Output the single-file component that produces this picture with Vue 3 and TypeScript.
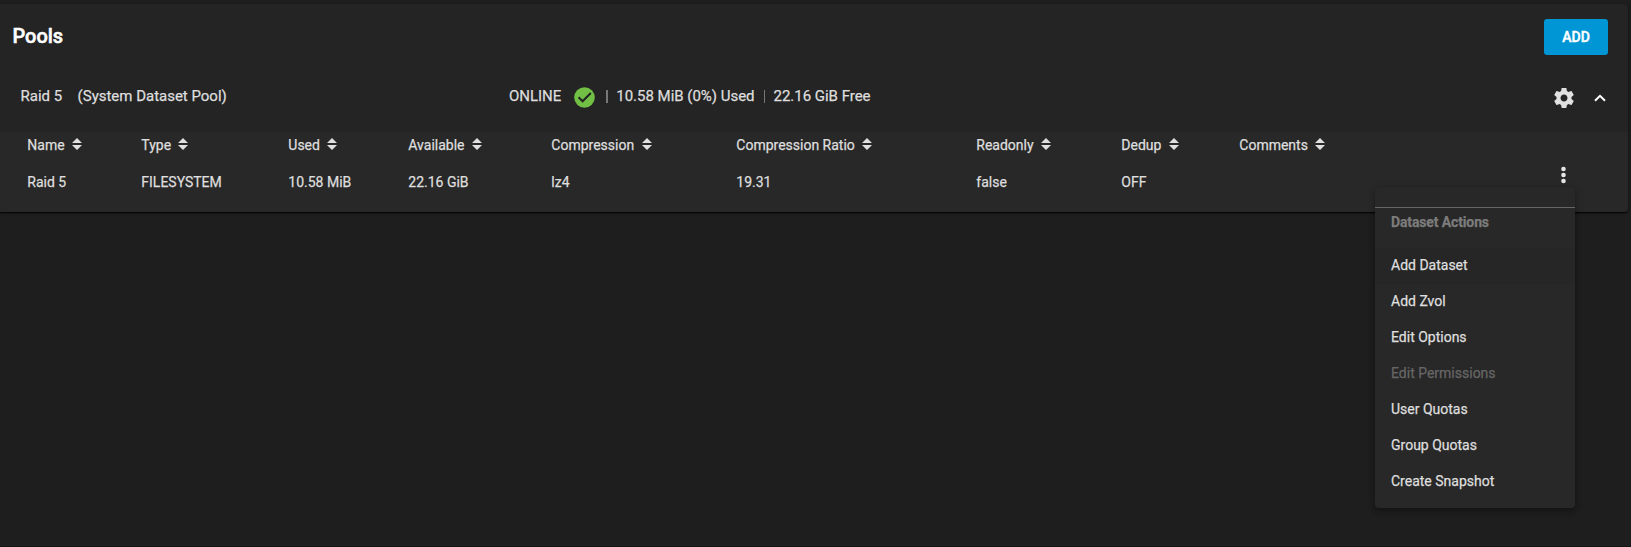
<script setup lang="ts">
interface Column {
  label: string
  value: string
}

interface Action {
  label: string
  state?: 'focused' | 'disabled'
}

const columns: Column[] = [
  { label: 'Name', value: 'Raid 5' },
  { label: 'Type', value: 'FILESYSTEM' },
  { label: 'Used', value: '10.58 MiB' },
  { label: 'Available', value: '22.16 GiB' },
  { label: 'Compression', value: 'lz4' },
  { label: 'Compression Ratio', value: '19.31' },
  { label: 'Readonly', value: 'false' },
  { label: 'Dedup', value: 'OFF' },
  { label: 'Comments', value: '' },
]

const actions: Action[] = [
  { label: 'Add Dataset', state: 'focused' },
  { label: 'Add Zvol' },
  { label: 'Edit Options' },
  { label: 'Edit Permissions', state: 'disabled' },
  { label: 'User Quotas' },
  { label: 'Group Quotas' },
  { label: 'Create Snapshot' },
]
</script>

<template>
  <main class="page">
    <section class="card">
      <header class="card-header">
        <h1>Pools</h1>
        <button class="add" type="button">ADD</button>
      </header>

      <div class="pool">
        <div class="pool-name"><span>Raid 5</span><span>(System Dataset Pool)</span></div>
        <div class="pool-status">
          <span>ONLINE</span>
          <svg class="check" viewBox="0 0 21 21">
            <circle cx="10.5" cy="10.5" r="10.3" fill="#71bf44" />
            <path d="M4.6 10.3 8.6 14.3 16.8 5.9" fill="none" stroke="#242424" stroke-width="2.1" />
          </svg>
          <i class="bar" />
          <span class="used">10.58 MiB (0%) Used</span>
          <i class="bar" />
          <span>22.16 GiB Free</span>
        </div>
        <div class="pool-tools">
          <svg class="gear" viewBox="0 0 24 24">
            <path fill="#e0e0e0" d="M19.43 12.98c.04-.32.07-.64.07-.98s-.03-.66-.07-.98l2.11-1.65c.19-.15.24-.42.12-.64l-2-3.46c-.12-.22-.39-.3-.61-.22l-2.49 1c-.52-.4-1.08-.73-1.69-.98l-.38-2.65C14.46 2.18 14.25 2 14 2h-4c-.25 0-.46.18-.49.42l-.38 2.65c-.61.25-1.17.59-1.69.98l-2.49-1c-.23-.09-.49 0-.61.22l-2 3.46c-.13.22-.07.49.12.64l2.11 1.65c-.04.32-.07.65-.07.98s.03.66.07.98l-2.11 1.65c-.19.15-.24.42-.12.64l2 3.46c.12.22.39.3.61.22l2.49-1c.52.4 1.08.73 1.69.98l.38 2.65c.03.24.24.42.49.42h4c.25 0 .46-.18.49-.42l.38-2.65c.61-.25 1.17-.59 1.69-.98l2.49 1c.23.09.49 0 .61-.22l2-3.46c.12-.22.07-.49-.12-.64l-2.11-1.65zM12 15.5c-1.93 0-3.5-1.57-3.5-3.5s1.57-3.5 3.5-3.5 3.5 1.57 3.5 3.5-1.57 3.5-3.5 3.5z" />
          </svg>
          <svg class="chevron" viewBox="0 0 12 8">
            <path d="M1 6.8 6 1.8 11 6.8" fill="none" stroke="#fff" stroke-width="2" />
          </svg>
        </div>
      </div>

      <div class="table">
        <div v-for="col in columns" :key="col.label" class="column">
          <div class="head">
            <span>{{ col.label }}</span>
            <svg class="sort" viewBox="0 0 10 12">
              <path d="M5 0 10 5H0ZM0 7H10L5 12Z" fill="#e0e0e0" />
            </svg>
          </div>
          <div class="cell">{{ col.value }}</div>
        </div>
        <div class="row-menu">
          <svg class="dots" viewBox="0 0 6 18">
            <g fill="#e6e6e6">
              <circle cx="3.5" cy="3" r="2.3" />
              <circle cx="3.5" cy="9" r="2.3" />
              <circle cx="3.5" cy="15" r="2.3" />
            </g>
          </svg>
          <div class="menu">
            <div class="menu-title">Dataset Actions</div>
            <div v-for="a in actions" :key="a.label" class="item" :class="a.state">{{ a.label }}</div>
          </div>
        </div>
      </div>
    </section>
  </main>
</template>

<style>
html,
body {
  margin: 0;
  background: #1e1e1e;
}
</style>

<style scoped>
.page {
  box-sizing: border-box;
  height: 547px;
  padding: 4px 3px 0 0;
  overflow: hidden;
  background: #1e1e1e;
  border-bottom: 1px solid #141414;
  font-family: Roboto, sans-serif;
  font-size: 14px;
  color: #dedede;
  -webkit-text-stroke: 0.25px currentColor;
}
.card {
  height: 208px;
  background: #242424;
  border-radius: 0 4px 4px 0;
  box-shadow: 0 2px 1px -1px rgba(0, 0, 0, 0.55), 0 1px 1px rgba(0, 0, 0, 0.5), 0 1px 3px rgba(0, 0, 0, 0.35);
}
.card-header {
  display: flex;
  box-sizing: border-box;
  height: 64px;
  padding: 15px 20px 0 12.4px;
  justify-content: space-between;
}
h1 {
  margin: 0;
  font-size: 20px;
  line-height: 34px;
  font-weight: 500;
  color: #fff;
  -webkit-text-stroke-width: 0.5px;
}
.add {
  width: 64px;
  height: 36px;
  padding: 0;
  border: 0;
  border-radius: 3px;
  background: #0095d5;
  color: #fff;
  font: 500 14px/34px Roboto, sans-serif;
  -webkit-text-stroke: 0.4px #fff;
}
.pool {
  display: grid;
  grid-template-columns: 488.5px 1fr auto;
  box-sizing: border-box;
  height: 64px;
  padding: 0 22px 8px 20.5px;
  align-items: center;
  font-size: 15px;
}
.pool-name {
  display: flex;
  gap: 15.5px;
  letter-spacing: -0.01px;
}
.pool-status {
  display: flex;
  align-items: center;
  letter-spacing: -0.02px;
}
.check {
  width: 21px;
  height: 21px;
  margin: 2px 11px 0 13px;
}
.bar {
  width: 1.5px;
  height: 13px;
  margin: 0 8.5px 0 0;
  background: #777;
}
.used {
  margin-right: 9px;
}
.pool-tools {
  display: flex;
  align-items: center;
  padding-top: 4px;
}
.gear {
  width: 24px;
  height: 24px;
  margin-right: 18px;
}
.chevron {
  width: 12px;
  height: 8px;
}
.table {
  display: grid;
  grid-template-columns: 114px 147px 120px 143px 185px 240px 145px 118px 1fr 20px;
  height: 80px;
  padding: 0 55px 0 27.3px;
  border-radius: 0 0 4px 0;
  background: #282828;
}
.head {
  display: flex;
  gap: 7.4px;
  height: 27px;
  line-height: 27px;
}
.sort {
  width: 10px;
  height: 12px;
  margin-top: 6px;
}
.cell {
  line-height: 46px;
}
.row-menu {
  position: relative;
}
.dots {
  display: block;
  width: 6px;
  height: 18px;
  margin: 34px auto 0;
}
.menu {
  position: absolute;
  top: 55px;
  right: -2px;
  box-sizing: border-box;
  width: 200px;
  height: 321px;
  padding-top: 20px;
  border-radius: 4px;
  background: #282828;
  box-shadow: 0 2px 4px -1px rgba(0, 0, 0, 0.2), 0 4px 5px rgba(0, 0, 0, 0.14), 0 1px 10px rgba(0, 0, 0, 0.12);
}
.menu-title {
  box-sizing: border-box;
  height: 41px;
  padding-left: 16px;
  border-top: 1px solid #666;
  line-height: 29px;
  font-weight: 700;
  letter-spacing: -0.13px;
  color: #7c7c7c;
}
.item {
  height: 36px;
  padding-left: 16px;
  line-height: 34px;
}
.focused {
  background: #262626;
}
.disabled {
  color: #666;
}
</style>
